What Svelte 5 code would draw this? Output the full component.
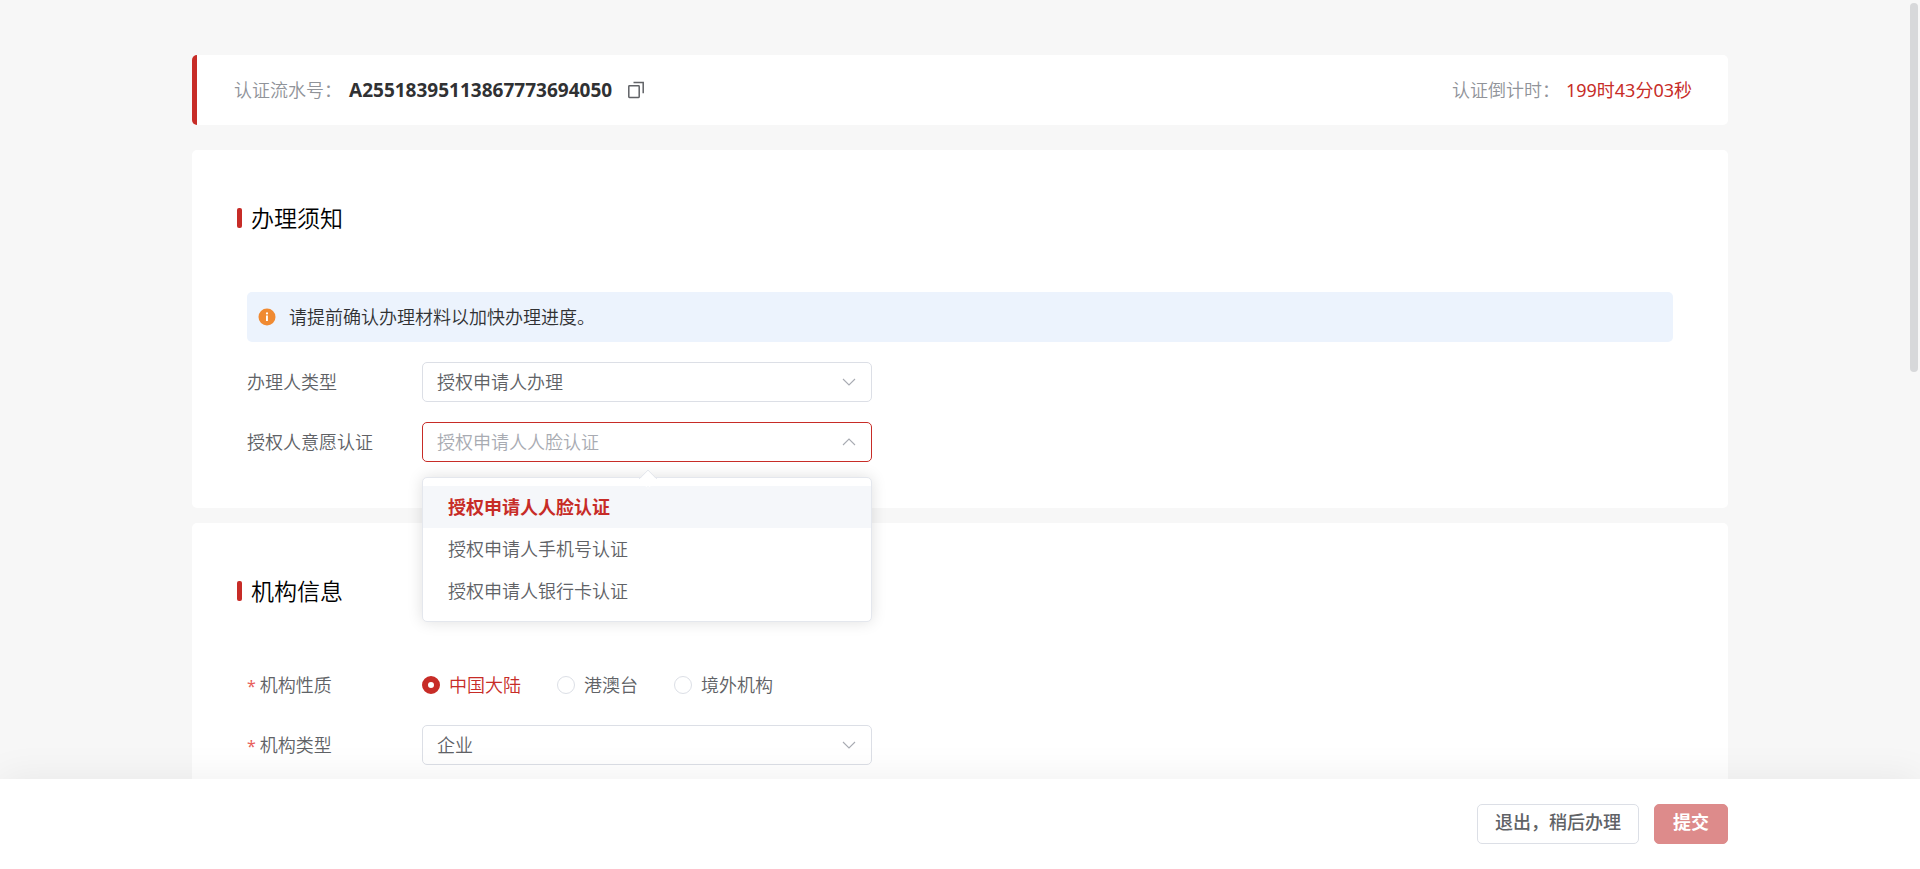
<script>
  const serial = 'A25518395113867773694050';
  const options = ['授权申请人人脸认证', '授权申请人手机号认证', '授权申请人银行卡认证'];
  const regions = ['中国大陆', '港澳台', '境外机构'];

  let open = $state(true);
  let method = $state(options[0]);
  let region = $state(regions[0]);

  function choose(option) {
    method = option;
    open = false;
  }
</script>

{#snippet chevron()}
  <svg class="chevron" viewBox="0 0 14 8" aria-hidden="true">
    <path d="M1 1l6 6 6-6" />
  </svg>
{/snippet}

<div class="page">
  <main class="scroller">
    <div class="column">
      <header class="card summary">
        <span class="muted">认证流水号：</span>
        <strong class="serial">{serial}</strong>
        <button class="copy" type="button" aria-label="复制">
          <svg viewBox="0 0 18 18" aria-hidden="true">
            <rect x="1.8" y="4.8" width="10.4" height="11.6" rx="0.6" />
            <path d="M6.5 1.6h9.7v10.6" />
          </svg>
        </button>
        <span class="muted timer-label">认证倒计时：</span>
        <span class="timer">199时43分03秒</span>
      </header>

      <section class="card notice">
        <h2>办理须知</h2>
        <div class="body">
          <div class="alert">
            <svg viewBox="0 0 18 18" aria-hidden="true">
              <circle cx="9" cy="9" r="8.5" fill="#f08a32" />
              <circle cx="9" cy="5.4" r="1.1" fill="#fff" />
              <path d="M8 7.6h1.9V13H8z" fill="#fff" />
            </svg>
            <span>请提前确认办理材料以加快办理进度。</span>
          </div>
          <div class="row">
            <label for="agent">办理人类型</label>
            <div class="field">
              <select id="agent">
                <option>授权申请人办理</option>
              </select>
              {@render chevron()}
            </div>
          </div>
          <div class="row">
            <label for="method">授权人意愿认证</label>
            <div class="field" class:open>
              <input
                id="method"
                type="text"
                role="combobox"
                aria-expanded={open}
                aria-controls="method-list"
                readonly
                placeholder={method}
                onclick={() => (open = !open)}
              />
              {@render chevron()}
              {#if open}
                <div class="menu" id="method-list" role="listbox">
                  {#each options as option}
                    <button
                      type="button"
                      role="option"
                      aria-selected={option === method}
                      onclick={() => choose(option)}>{option}</button>
                  {/each}
                </div>
              {/if}
            </div>
          </div>
        </div>
      </section>

      <section class="card">
        <h2>机构信息</h2>
        <div class="body">
          <div class="row" role="radiogroup" aria-labelledby="region-label">
            <span class="label required" id="region-label">机构性质</span>
            <div class="radios">
              {#each regions as name}
                <label class="radio" class:checked={region === name}>
                  <input type="radio" name="region" value={name} bind:group={region} />
                  {name}
                </label>
              {/each}
            </div>
          </div>
          <div class="row">
            <label class="required" for="kind">机构类型</label>
            <div class="field">
              <select id="kind">
                <option>企业</option>
              </select>
              {@render chevron()}
            </div>
          </div>
        </div>
      </section>
    </div>
  </main>

  <div class="thumb"></div>

  <footer>
    <div class="actions">
      <button type="button">退出，稍后办理</button>
      <button class="primary" type="button">提交</button>
    </div>
  </footer>
</div>

<style>
  :global(body) {
    margin: 0;
  }

  .page,
  .page :global(*) {
    box-sizing: border-box;
  }

  .page {
    --red: #c72c27;
    --line: #dcdfe6;
    --text: #606266;
    display: flex;
    flex-direction: column;
    height: 100vh;
    background: #f7f7f7;
    color: var(--text);
    font: 350 18px/24px "Noto Sans", "Noto Sans CJK SC", sans-serif;
  }

  button,
  input,
  select {
    font: inherit;
    color: inherit;
  }

  .scroller {
    flex: 1;
    min-height: 0;
    overflow-y: auto;
    scrollbar-width: none;
  }

  .column {
    display: flex;
    flex-direction: column;
    gap: 15px;
    width: 80%;
    margin: 0 auto;
    padding: 55px 0 15px;
  }

  .card {
    padding: 56px 55px 46px 45px;
    border-radius: 5px;
    background: #fff;
  }

  .summary {
    display: flex;
    align-items: center;
    margin-bottom: 10px;
    padding: 23px 36px 23px 37px;
    border-left: 5px solid var(--red);
  }

  .muted {
    color: #909399;
  }

  .serial {
    margin-left: 7px;
    color: #303133;
    font-size: 19px;
    font-weight: 700;
  }

  .copy {
    display: flex;
    margin-left: 15px;
    padding: 0;
    border: 0;
    background: none;
    cursor: pointer;
  }

  .copy svg {
    width: 18px;
    height: 18px;
    fill: none;
    stroke: #606266;
    stroke-width: 1.5;
  }

  .timer-label {
    margin-left: auto;
  }

  .timer {
    margin-left: 6px;
    color: var(--red);
    font-weight: 400;
  }

  h2 {
    display: flex;
    align-items: center;
    gap: 9px;
    margin: 0 0 62px;
    color: #000;
    font-size: 23px;
    font-weight: 350;
    line-height: 24px;
  }

  h2::before {
    content: "";
    width: 5px;
    height: 20px;
    border-radius: 2px;
    background: var(--red);
  }

  .body {
    display: flex;
    flex-direction: column;
    gap: 20px;
    padding-left: 10px;
  }

  .alert {
    display: flex;
    align-items: center;
    gap: 13px;
    padding: 13px 11px;
    border-radius: 5px;
    background: #ecf3fd;
    color: #303133;
  }

  .alert svg {
    width: 18px;
    height: 18px;
  }

  .row {
    display: grid;
    grid-template-columns: 175px minmax(0, 450px);
    align-items: center;
    min-height: 40px;
  }

  .required::before {
    content: "*";
    margin-right: 4px;
    color: #e8605c;
    font-size: 16px;
    font-weight: 400;
  }

  .field {
    position: relative;
    display: flex;
  }

  .field select,
  .field input {
    width: 100%;
    height: 40px;
    padding: 0 40px 0 14px;
    border: 1px solid var(--line);
    border-radius: 5px;
    outline: 0;
    background: #fff;
    appearance: none;
  }

  .field input::placeholder {
    color: #a8abb2;
    opacity: 1;
  }

  .field.open input {
    border-color: var(--red);
  }

  .field :global(.chevron) {
    position: absolute;
    top: 16px;
    right: 16px;
    width: 14px;
    height: 8px;
    fill: none;
    stroke: #a8abb2;
    stroke-width: 1.1;
    pointer-events: none;
  }

  .field.open :global(.chevron) {
    transform: rotate(180deg);
  }

  .menu {
    position: absolute;
    z-index: 2;
    top: 55px;
    left: 0;
    right: 0;
    display: flex;
    flex-direction: column;
    padding: 8px 0 9px;
    border: 1px solid #e4e7ed;
    border-radius: 5px;
    background: #fff;
    box-shadow: 0 0 15px rgba(0, 0, 0, 0.13);
  }

  .menu::before {
    content: "";
    position: absolute;
    top: -6px;
    left: calc(50% - 6px);
    width: 12px;
    height: 12px;
    border: 1px solid #e4e7ed;
    border-right-color: transparent;
    border-bottom-color: transparent;
    border-radius: 2px 0 0;
    background: linear-gradient(135deg, #fff 50%, transparent 50%);
    transform: rotate(45deg);
  }

  .menu button {
    height: 42px;
    padding: 0 25px;
    border: 0;
    background: none;
    text-align: left;
  }

  .menu button[aria-selected="true"] {
    background: #f5f7fa;
    color: var(--red);
    font-weight: 700;
  }

  .radios {
    display: flex;
    gap: 36px;
    white-space: nowrap;
  }

  .radio {
    display: flex;
    align-items: center;
    gap: 9px;
  }

  .radio input {
    width: 18px;
    height: 18px;
    margin: 0;
    border: 1px solid var(--line);
    border-radius: 50%;
    background: #fff;
    appearance: none;
  }

  .radio.checked {
    color: var(--red);
  }

  .radio.checked input {
    border: 6px solid var(--red);
  }

  .thumb {
    position: fixed;
    z-index: 3;
    top: 3px;
    right: 2px;
    width: 8px;
    height: 369px;
    border-radius: 4px;
    background: #d7d8da;
  }

  footer {
    position: relative;
    z-index: 1;
    padding: 25px 0;
    background: #fff;
    box-shadow: 0 0 40px rgba(0, 0, 0, 0.07);
  }

  .actions {
    display: flex;
    justify-content: flex-end;
    gap: 15px;
    width: 80%;
    margin: 0 auto;
  }

  .actions button {
    min-width: 74px;
    height: 40px;
    padding: 0 17px 4px;
    border: 1px solid var(--line);
    border-radius: 5px;
    background: #fff;
    font-weight: 500;
  }

  .actions .primary {
    border-color: #dd8b8b;
    background: #dd8b8b;
    color: #fff;
    font-weight: 700;
  }
</style>
